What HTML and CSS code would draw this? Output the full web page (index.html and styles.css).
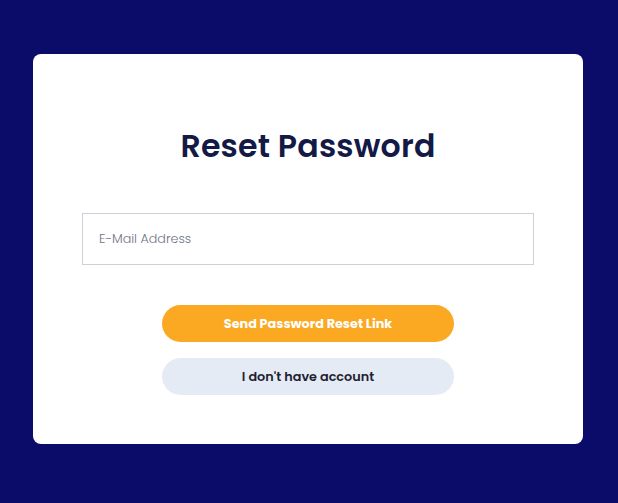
FILE: index.html
```html
<!DOCTYPE html>
<html lang="en">
<head>
<meta charset="utf-8">
<title>Reset Password</title>
<link rel="stylesheet" href="styles.css">
</head>
<body>
<main class="page">
  <section class="card">
    <h1 class="title">Reset Password</h1>
    <form class="form">
      <input class="field" type="email" placeholder="E-Mail Address">
      <div class="actions">
        <button type="button" class="btn btn-primary">Send Password Reset Link</button>
        <button type="button" class="btn btn-secondary">I don't have account</button>
      </div>
    </form>
  </section>
</main>
</body>
</html>
```
FILE: styles.css
```css
* { box-sizing: border-box; }
html, body { margin: 0; padding: 0; }
body {
  background: #0b0c69;
  font-family: Poppins, Inter, "Noto Sans", sans-serif;
  width: 618px;
  height: 503px;
  overflow: hidden;
}
.page {
  padding: 54px 35px 0 33px;
}
.card {
  width: 550px;
  height: 390px;
  background: #ffffff;
  border-radius: 8px;
  padding: 68px 49px 0 49px;
  display: flex;
  flex-direction: column;
  align-items: center;
}
.title {
  margin: 0;
  font-size: 31.6px;
  line-height: 48px;
  font-weight: 600;
  color: #121a45;
  letter-spacing: 0.2px;
}
.form {
  width: 100%;
  margin-top: 43px;
  display: flex;
  flex-direction: column;
  align-items: center;
}
.field {
  width: 452px;
  height: 52px;
  border: 1px solid #cdd0d6;
  border-radius: 0;
  padding: 0 16px;
  font-family: inherit;
  font-size: 12.7px;
  font-weight: 300;
  color: #333;
  outline: none;
}
.field::placeholder { color: #6f7585; }
.actions {
  margin-top: 40px;
  display: flex;
  flex-direction: column;
  gap: 16px;
}
.btn {
  width: 292px;
  height: 37px;
  border: none;
  border-radius: 19px;
  font-family: inherit;
  font-size: 12.8px;
  cursor: pointer;
}
.btn-primary {
  background: #fba823;
  color: #ffffff;
  font-weight: 700;
}
.btn-secondary {
  background: #e5ebf5;
  color: #1e2130;
  font-weight: 600;
}
```
